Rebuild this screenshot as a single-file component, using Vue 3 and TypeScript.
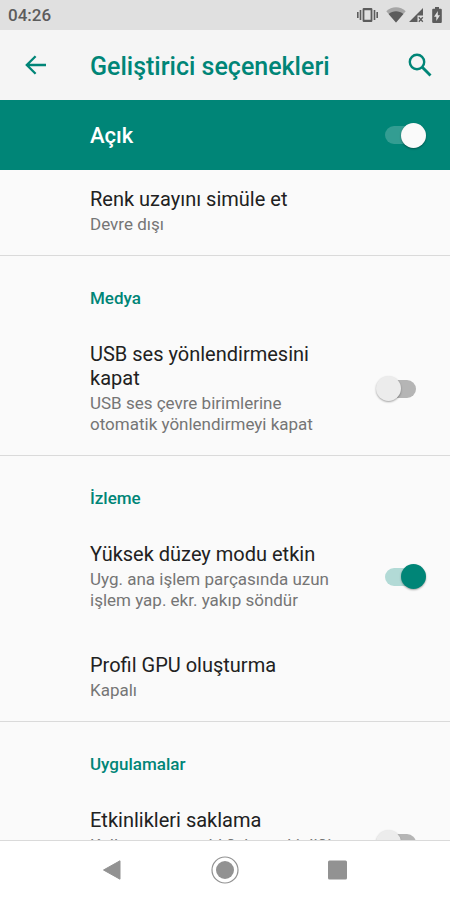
<script setup lang="ts">
import { reactive, ref } from 'vue'

interface Setting {
  id: string
  title: string
  summary: string
  checked?: boolean
}

interface Section {
  heading?: string
  items: Setting[]
}

const enabled = ref(true)

const sections = reactive<Section[]>([
  {
    items: [{ id: 'color-space', title: 'Renk uzayını simüle et', summary: 'Devre dışı' }],
  },
  {
    heading: 'Medya',
    items: [
      {
        id: 'usb-audio',
        title: 'USB ses yönlendirmesini kapat',
        summary: 'USB ses çevre birimlerine otomatik yönlendirmeyi kapat',
        checked: false,
      },
    ],
  },
  {
    heading: 'İzleme',
    items: [
      {
        id: 'strict-mode',
        title: 'Yüksek düzey modu etkin',
        summary: 'Uyg. ana işlem parçasında uzun işlem yap. ekr. yakıp söndür',
        checked: true,
      },
      { id: 'gpu-profile', title: 'Profil GPU oluşturma', summary: 'Kapalı' },
    ],
  },
  {
    heading: 'Uygulamalar',
    items: [
      {
        id: 'keep-activities',
        title: 'Etkinlikleri saklama',
        summary: 'Kullanıcının ayrıldığı her etkinliği hemen yok et',
        checked: false,
      },
    ],
  },
])
</script>

<template>
  <div class="screen">
    <div class="status">
      <span class="clock">04:26</span>
      <div class="status-icons">
        <svg width="21" height="16" viewBox="0 0 21 16" fill="#5c5c5c">
          <path d="M0 5h1.6v6H0zM2.7 3h1.6v10H2.7zM16.7 3h1.6v10h-1.6zM19.4 5H21v6h-1.6z" />
          <path fill-rule="evenodd" d="M6.8 1h7.4Q15.4 1 15.4 2.200V13.800Q15.4 15 14.200 15H6.800Q5.600 15 5.600 13.800V2.200Q5.600 1 6.800 1zM7.400 3.200v9.600h6.200V3.200z" />
        </svg>
        <svg class="wifi" width="20" height="16" viewBox="0 0 20 16">
          <path d="M10 15.500.3 4.200C5.500-1 14.500-1 19.700 4.200z" fill="#a6a6a6" />
          <path d="M10 15.500 2.600 6.900C7 3.200 13 3.200 17.400 6.900z" fill="#5c5c5c" />
        </svg>
        <svg class="signal" width="15" height="16" viewBox="0 0 15 16">
          <path d="M0 15 14 1v7.500H8.500V15z" fill="#5c5c5c" />
          <path d="m9.800 10.300 4 4.400m0-4.400-4 4.400" stroke="#5c5c5c" stroke-width="1.300" />
        </svg>
        <svg class="battery" width="10" height="16" viewBox="0 0 10 16">
          <path d="M3 0h4v1.700h1.800q1 0 1 1V15q0 1-1 1H1.200q-1 0-1-1V2.700q0-1 1-1H3z" fill="#5c5c5c" />
          <path d="M5.800 4 2 9.700h2.300V14L8 8.300H5.800z" fill="#e0e0e0" />
        </svg>
      </div>
    </div>

    <header class="toolbar">
      <button class="icon-button" type="button" aria-label="Geri">
        <svg width="22" height="20" viewBox="0 0 22 20" fill="none" stroke="#008577" stroke-width="2.300">
          <path d="M21 10H2.200M10.600 1.200 1.800 10l8.800 8.800" />
        </svg>
      </button>
      <h1>Geliştirici seçenekleri</h1>
      <button class="icon-button" type="button" aria-label="Ara">
        <svg width="24" height="24" viewBox="0 0 24 24" fill="none" stroke="#008577">
          <circle cx="9" cy="9" r="7.200" stroke-width="2.400" />
          <path d="m14.300 14.300 8.200 8.200" stroke-width="2.900" />
        </svg>
      </button>
    </header>

    <label class="master">
      <span>Açık</span>
      <input v-model="enabled" class="switch light" type="checkbox" role="switch" />
    </label>

    <main class="list">
      <section v-for="(section, i) in sections" :key="i" class="section">
        <h2 v-if="section.heading">{{ section.heading }}</h2>
        <template v-for="item in section.items" :key="item.id">
          <label v-if="item.checked !== undefined" class="row">
            <span class="text">
              <span class="title">{{ item.title }}</span>
              <span class="summary">{{ item.summary }}</span>
            </span>
            <input v-model="item.checked" class="switch" type="checkbox" role="switch" />
          </label>
          <button v-else class="row" type="button">
            <span class="text">
              <span class="title">{{ item.title }}</span>
              <span class="summary">{{ item.summary }}</span>
            </span>
          </button>
        </template>
      </section>
    </main>

    <nav class="navbar">
      <button type="button" aria-label="Geri">
        <svg width="30" height="30" viewBox="0 0 30 30">
          <path d="M5.500 15 22 5.800v18.400z" fill="#929292" stroke="#929292" stroke-linejoin="round" />
        </svg>
      </button>
      <button type="button" aria-label="Ana ekran">
        <svg width="30" height="30" viewBox="0 0 30 30">
          <circle cx="15" cy="15" r="13" fill="none" stroke="#929292" stroke-width="1.200" />
          <circle cx="15" cy="15" r="9" fill="#929292" />
        </svg>
      </button>
      <button type="button" aria-label="Son uygulamalar">
        <svg width="30" height="30" viewBox="0 0 30 30">
          <rect x="6" y="5.500" width="19" height="19" rx="1.500" fill="#929292" />
        </svg>
      </button>
    </nav>
  </div>
</template>

<style>
body {
  margin: 0;
  background: #fafafa;
}
</style>

<style scoped>
.screen {
  display: flex;
  flex-direction: column;
  height: 100vh;
  overflow: hidden;
  background: #fafafa;
  color: #212121;
  font-family: Roboto, 'Noto Sans', sans-serif;
}

button {
  padding: 0;
  border: 0;
  background: none;
  font: inherit;
  color: inherit;
}

svg {
  display: block;
}

.status {
  display: flex;
  flex: none;
  align-items: center;
  justify-content: space-between;
  height: 30px;
  padding: 0 8px;
  background: #e0e0e0;
}

.clock {
  color: #5c5c5c;
  font-size: 17px;
  font-weight: 500;
}

.status-icons {
  display: flex;
  align-items: center;
}

.wifi {
  margin-left: 8px;
}

.signal {
  margin-left: 3px;
}

.battery {
  margin-left: 8px;
}

.toolbar {
  display: flex;
  flex: none;
  align-items: center;
  height: 70px;
  padding: 0 18px 0 25px;
  background: #f5f5f5;
}

.icon-button {
  flex: none;
}

h1 {
  flex: 1;
  margin: 0;
  padding: 4px 0 0 43px;
  color: #008577;
  font-size: 25px;
  font-weight: 500;
  line-height: 30px;
}

.master {
  position: relative;
  display: flex;
  flex: none;
  align-items: center;
  justify-content: space-between;
  height: 70px;
  padding: 0 24px 0 90px;
  background: #008577;
  color: #fff;
  font-size: 22px;
  font-weight: 500;
}

/* The first row sits slightly scrolled beneath the master switch bar. */
.list {
  flex: 1;
  min-height: 0;
  margin-top: -5px;
  overflow: hidden;
}

.section + .section {
  border-top: 1px solid #dadada;
}

h2 {
  margin: 0;
  padding: 32px 24px 12px 90px;
  color: #008577;
  font-size: 17px;
  font-weight: 500;
  line-height: 21px;
}

.row {
  display: flex;
  box-sizing: border-box;
  align-items: center;
  gap: 30px;
  width: 100%;
  min-height: 90px;
  padding: 21px 24px 20px 90px;
  text-align: left;
}

.text {
  display: flex;
  flex: 1;
  flex-direction: column;
  gap: 3px;
}

.title {
  font-size: 20px;
  line-height: 24px;
}

.summary {
  color: #757575;
  font-size: 17px;
  line-height: 21px;
}

.switch {
  display: flex;
  flex: none;
  align-items: center;
  width: 51px;
  height: 26px;
  margin: 0;
  appearance: none;
}

.switch::before {
  flex: none;
  width: 31px;
  height: 18px;
  margin-left: 10px;
  border-radius: 9px;
  background: #b5b5b5;
  content: '';
}

.switch::after {
  flex: none;
  width: 25px;
  height: 25px;
  margin-left: -40px;
  border-radius: 50%;
  background: #ececec;
  box-shadow: 0 1px 2px rgba(0, 0, 0, 0.35);
  content: '';
}

.switch:checked::before {
  background: #b2dad6;
}

.switch:checked::after {
  margin-left: -15px;
  background: #008577;
}

.switch.light:checked::before {
  background: #339d92;
}

.switch.light:checked::after {
  background: #fafafa;
}

.navbar {
  display: flex;
  flex: none;
  align-items: center;
  justify-content: center;
  gap: 82px;
  box-sizing: border-box;
  height: 60px;
  padding-bottom: 1px;
  border-top: 1px solid #dadada;
  background: #fff;
}
</style>
